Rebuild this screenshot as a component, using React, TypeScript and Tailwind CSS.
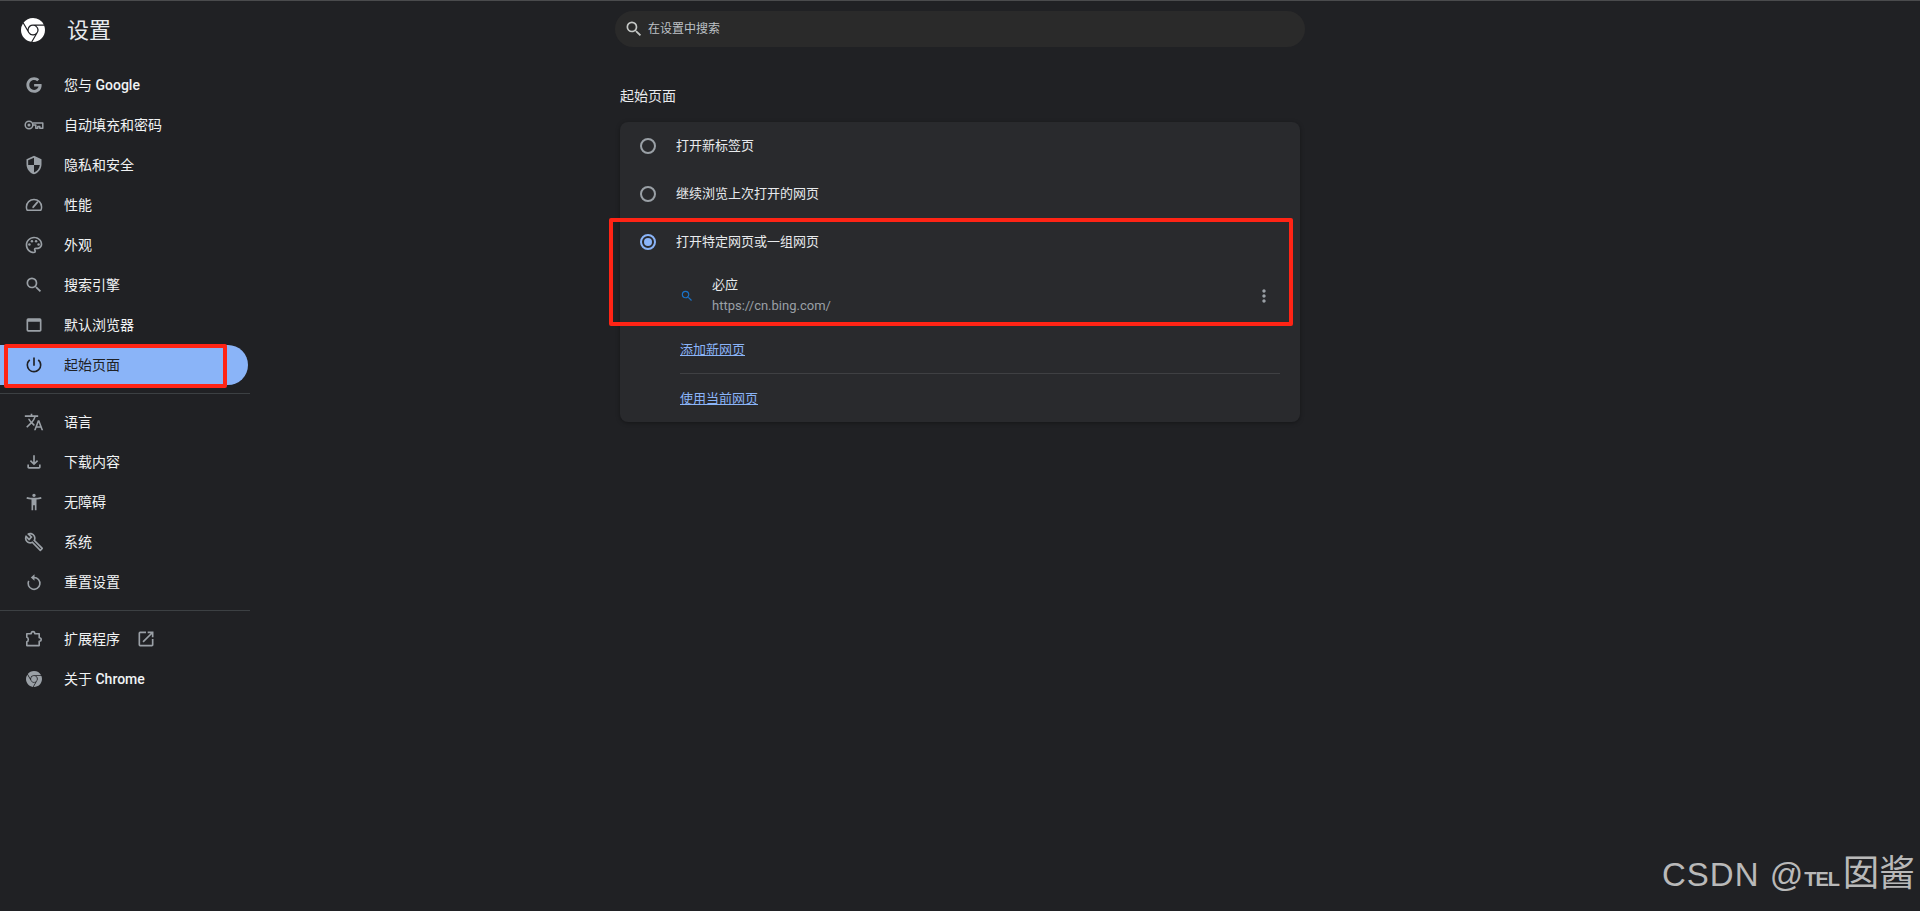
import type { ComponentType } from 'react';
import { FaGoogle } from 'react-icons/fa';
import { SiGooglechrome } from 'react-icons/si';
import {
  MdAccessibilityNew,
  MdMoreVert,
  MdOpenInNew,
  MdOutlineBuild,
  MdOutlineFileDownload,
  MdOutlinePalette,
  MdOutlineSecurity,
  MdOutlineTranslate,
  MdOutlineWebAsset,
  MdPowerSettingsNew,
  MdSearch,
} from 'react-icons/md';

type IconProps = { size?: number; className?: string };
type NavEntry = {
  label: string;
  latin?: string;
  icon: ComponentType<IconProps>;
  size?: number;
  active?: boolean;
  external?: boolean;
};

function KeyIcon({ size = 20 }: IconProps) {
  return (
    <svg width={size} height={size} viewBox="0 0 20 20" fill="none" stroke="currentColor" strokeWidth="1.5">
      <circle cx="5" cy="10" r="3.8" />
      <circle cx="5" cy="10" r="0.8" fill="currentColor" />
      <path d="M8.8 8h10v5.2h-3v-1.8h-2v1.8h-2v-3.2H8.8" strokeLinejoin="round" />
    </svg>
  );
}

function SpeedIcon({ size = 20 }: IconProps) {
  return (
    <svg width={size} height={size} viewBox="0 0 20 20" fill="none" stroke="currentColor" strokeWidth="1.5">
      <path d="M3.1 15.2h13.8c.5-1 .7-2.1.7-3.2a7.6 7.6 0 0 0-15.2 0c0 1.1.2 2.2.7 3.2z" strokeLinejoin="round" />
      <path d="M9.2 12.2l4.3-5" strokeLinecap="round" strokeWidth="1.8" />
    </svg>
  );
}

function ResetIcon({ size = 20 }: IconProps) {
  return (
    <svg width={size} height={size} viewBox="0 0 20 20" fill="none" stroke="currentColor" strokeWidth="1.6">
      <path d="M10 5.5a5.9 5.9 0 1 1-5.3 3.3" />
      <path d="M10.5 2.2L6.8 5.5l3.7 3.3z" fill="currentColor" stroke="none" />
    </svg>
  );
}

function ExtensionIcon({ size = 20 }: IconProps) {
  return (
    <svg width={size} height={size} viewBox="0 0 20 20" fill="none" stroke="currentColor" strokeWidth="1.6">
      <path
        d="M2.800 4.800h4.400c0-1.300.7-2.200 1.800-2.200s1.800.9 1.800 2.200h4.400v4c1.300 0 2 .7 2 1.700s-.7 1.700-2 1.700v4.400H2.800v-3.800c1-.2 1.500-1.100 1.500-2.300S3.800 8.500 2.800 8.300z"
        strokeLinejoin="round"
      />
    </svg>
  );
}

const groupOne: NavEntry[] = [
  { label: '您与 ', latin: 'Google', icon: FaGoogle, size: 16 },
  { label: '自动填充和密码', icon: KeyIcon },
  { label: '隐私和安全', icon: MdOutlineSecurity },
  { label: '性能', icon: SpeedIcon },
  { label: '外观', icon: MdOutlinePalette },
  { label: '搜索引擎', icon: MdSearch },
  { label: '默认浏览器', icon: MdOutlineWebAsset },
  { label: '起始页面', icon: MdPowerSettingsNew, active: true },
];

const groupTwo: NavEntry[] = [
  { label: '语言', icon: MdOutlineTranslate },
  { label: '下载内容', icon: MdOutlineFileDownload },
  { label: '无障碍', icon: MdAccessibilityNew },
  { label: '系统', icon: MdOutlineBuild },
  { label: '重置设置', icon: ResetIcon },
];

const groupThree: NavEntry[] = [
  { label: '扩展程序', icon: ExtensionIcon, external: true },
  { label: '关于 ', latin: 'Chrome', icon: SiGooglechrome, size: 16 },
];

function NavItem({ item }: { item: NavEntry }) {
  const Icon = item.icon;
  return (
    <div
      className={`flex h-10 w-[248px] items-center rounded-r-full pl-6 ${
        item.active ? 'bg-[#8ab4f8] text-[#202124]' : 'text-[#f1f3f4]'
      }`}
    >
      <span className={`flex w-5 justify-center ${item.active ? 'text-[#202124]' : 'text-[#9aa0a6]'}`}>
        <Icon size={item.size ?? 20} />
      </span>
      <span className="ml-5 whitespace-pre text-sm">
        {item.label}
        {item.latin && <span className="font-medium">{item.latin}</span>}
      </span>
      {item.external && <MdOpenInNew size={20} className="ml-4 text-[#9aa0a6]" />}
    </div>
  );
}

function Radio({ checked }: { checked?: boolean }) {
  return (
    <span
      className={`flex h-4 w-4 items-center justify-center rounded-full border-2 ${
        checked ? 'border-[#8ab4f8]' : 'border-[#9aa0a6]'
      }`}
    >
      {checked && <span className="h-2 w-2 rounded-full bg-[#8ab4f8]" />}
    </span>
  );
}

function RadioRow({ label, checked }: { label: string; checked?: boolean }) {
  return (
    <div className="flex h-12 items-center pl-5">
      <Radio checked={checked} />
      <span className="ml-5 text-[13px] text-[#e8eaed]">{label}</span>
    </div>
  );
}

export default function App() {
  return (
    <div
      className="relative flex h-screen overflow-hidden border-t border-[#4a4b4d] bg-[#202124] text-[#e8eaed]"
      style={{ fontFamily: 'Roboto, "Noto Sans CJK SC", sans-serif' }}
    >
      <aside className="w-[251px] shrink-0">
        <div className="flex h-[64px] items-start pl-[21px] pt-[17px]">
          <SiGooglechrome size={24} className="text-white" />
          <span className="ml-[22px] mt-px text-[22px] leading-6">设置</span>
        </div>
        <nav>
          {groupOne.map((item) => (
            <NavItem key={item.label} item={item} />
          ))}
          <div className="my-2 h-px w-[250px] bg-[#3c4043]" />
          {groupTwo.map((item) => (
            <NavItem key={item.label} item={item} />
          ))}
          <div className="my-2 h-px w-[250px] bg-[#3c4043]" />
          {groupThree.map((item) => (
            <NavItem key={item.label} item={item} />
          ))}
        </nav>
      </aside>

      <main className="flex flex-1 flex-col items-center pr-[251px]">
        <div className="mt-[10px] flex h-9 w-[690px] items-center rounded-full bg-[#2a2a2a] pl-[9px]">
          <MdSearch size={20} className="text-[#c4c7c5]" />
          <span className="ml-[4px] text-xs text-[#bdc1c6]">在设置中搜索</span>
        </div>

        <div className="w-[680px]">
          <h2 className="mt-[39px] text-sm leading-5 font-normal">起始页面</h2>
          <section className="mt-4 rounded-lg bg-[#292a2d] shadow-[0_1px_4px_rgba(0,0,0,0.35)]">
            <RadioRow label="打开新标签页" />
            <RadioRow label="继续浏览上次打开的网页" />
            <RadioRow label="打开特定网页或一组网页" checked />

            <div className="flex h-[59px] items-center pl-[60px] pr-[26px]">
              <MdSearch size={14} className="text-[#1a73c8]" />
              <div className="ml-[18px] flex-1">
                <div className="text-[13px] leading-5 text-[#e8eaed]">必应</div>
                <div className="mt-px text-[13px] leading-5 text-[#9aa0a6]">https://cn.bing.com/</div>
              </div>
              <MdMoreVert size={20} className="text-[#9aa0a6]" />
            </div>

            <div className="mx-5 pl-10">
              <div className="flex h-12 items-center pt-0.5">
                <a className="text-[13px] text-[#8ab4f8] underline">添加新网页</a>
              </div>
              <div className="h-px bg-[#3f4043]" />
              <div className="flex h-12 items-center pt-0.5">
                <a className="text-[13px] text-[#8ab4f8] underline">使用当前网页</a>
              </div>
            </div>
          </section>
        </div>
      </main>

      {/* 截图上的红色标注框 */}
      <div className="absolute left-[4px] top-[343px] h-[44px] w-[223px] rounded-[2px] border-[4px] border-[#ff2415]" />
      <div className="absolute left-[609px] top-[217px] h-[108px] w-[684px] rounded-[2px] border-[4px] border-[#ff2415]" />

      <div
        className="absolute bottom-[12px] right-[5px] flex items-baseline text-[#b9b9b9]"
        style={{ fontFamily: '"Liberation Sans", "Noto Sans CJK SC", sans-serif' }}
      >
        <span className="text-[33px] leading-10 tracking-[1px]">CSDN @</span>
        <span className="text-[20px] leading-10 font-bold tracking-[-1px]">TEL</span>
        <span className="ml-[4px] text-[36px] leading-10">囡酱</span>
      </div>
    </div>
  );
}
